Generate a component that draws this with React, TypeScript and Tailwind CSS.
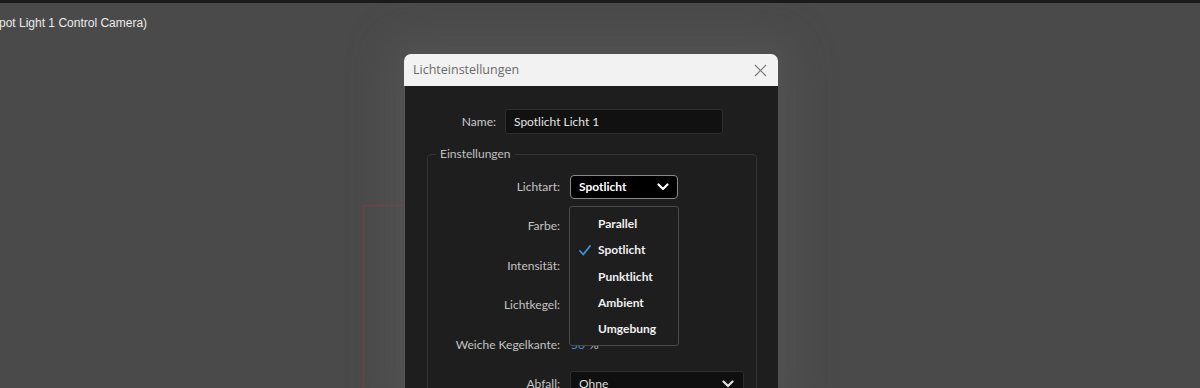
import React from "react";

const Chevron = ({ className }: { className?: string }) => (
  <svg className={className} width="12" height="8" viewBox="0 0 12 8" fill="none">
    <path d="M1.5 1.5 L6 6 L10.5 1.5" stroke="currentColor" strokeWidth="2.2" strokeLinecap="round" strokeLinejoin="round" />
  </svg>
);

const Check = () => (
  <svg width="12" height="11" viewBox="0 0 12 11" fill="none">
    <path d="M1 6 L4.3 9.5 L11 1" stroke="#3f93e2" strokeWidth="1.8" strokeLinecap="round" strokeLinejoin="round" />
  </svg>
);

const lightTypes = ["Parallel", "Spotlicht", "Punktlicht", "Ambient", "Umgebung"];

const Row = ({ label, children }: { label: string; children?: React.ReactNode }) => (
  <div className="flex items-center h-[24px]">
    <div className="w-[132px] text-right text-[#c4c4c4]">{label}</div>
    <div className="ml-[10px] flex items-center">{children}</div>
  </div>
);

export default function App() {
  return (
    <div
      className="relative w-[1200px] h-[388px] overflow-hidden bg-[#4a4a4a] flex flex-col"
      style={{ fontFamily: "Lato, 'Noto Sans', sans-serif" }}
    >
      <div className="h-[3px] bg-[#1b1b1b] shrink-0" />
      <div
        className="h-[40px] shrink-0 flex items-center text-[12px] text-[#ececec] ml-[-1px] pb-[1px]"
        style={{ fontFamily: "'Liberation Sans', Arial, sans-serif" }}
      >
        pot Light 1 Control Camera)
      </div>

      {/* composition guide on the canvas */}
      <div className="absolute left-[363px] top-[205px] w-[300px] h-[300px] border-l border-t border-[#7a3e3e]" />

      <div className="relative ml-[404px] mt-[11px] w-[374px] shrink-0 shadow-[0_0_40px_12px_rgba(95,95,95,0.45)]">
        <div className="h-[32px] bg-[#f2f2f2] rounded-t-[7px] flex items-center justify-between pl-[9px] pr-[9px]">
          <span className="text-[12.5px] text-[#6a6a6a]" style={{ fontFamily: "'Open Sans', sans-serif" }}>
            Lichteinstellungen
          </span>
          <svg width="13" height="13" viewBox="0 0 13 13" className="mr-[2px]">
            <path d="M1 1 L12 12 M12 1 L1 12" stroke="#7a7a7a" strokeWidth="1.2" />
          </svg>
        </div>

        <div className="bg-[#1e1e1e] border-l border-[#555] h-[320px] text-[12px] pt-[23px]">
          <div className="flex items-center h-[25px]">
            <div className="w-[91px] text-right text-[#cdcdcd]">Name:</div>
            <div className="ml-[9px] w-[218px] h-[25px] bg-[#111] border border-[#2f2f2f] rounded-[3px] flex items-center pl-[8px] text-[#e2e2e2]">
              Spotlicht Licht 1
            </div>
          </div>

          <fieldset className="relative mt-[12px] ml-[22px] w-[330px] border border-[#333] rounded-[4px] pt-[13px] pb-[20px]">
            <legend className="ml-[8px] px-[4px] text-[#c0c0c0] leading-[16px]">Einstellungen</legend>
            <div className="flex flex-col gap-y-[15.4px]">
              <Row label="Lichtart:">
                <div className="w-[108px] h-[24px] bg-black border border-[#8a8a8a] rounded-[4px] flex items-center justify-between pl-[8px] pr-[8px] font-bold text-white">
                  Spotlicht
                  <Chevron className="text-white" />
                </div>
              </Row>
              <Row label="Farbe:" />
              <Row label="Intensität:" />
              <Row label="Lichtkegel:" />
              <Row label="Weiche Kegelkante:">
                <span className="text-[#3f8fd8] ml-[1px]">50</span>
                <span className="text-[#bdbdbd] ml-[4px]">%</span>
              </Row>
              <Row label="Abfall:">
                <div className="w-[174px] h-[25px] bg-[#0f0f0f] border border-[#2e2e2e] rounded-[3px] flex items-center justify-between pl-[8px] pr-[9px] text-[#dedede]">
                  Ohne
                  <Chevron className="text-[#e0e0e0]" />
                </div>
              </Row>
            </div>

            <div className="absolute left-[141px] top-[44px] w-[110px] h-[140px] bg-[#1e1e1e] border border-[#4a4a4a] rounded-[3px] z-10 flex flex-col pt-[4px]">
              {lightTypes.map((t) => (
                <div key={t} className="h-[26.3px] flex items-center text-[#f0f0f0] font-bold">
                  <span className="w-[28px] flex justify-center pl-[2px]">{t === "Spotlicht" ? <Check /> : null}</span>
                  {t}
                </div>
              ))}
            </div>
          </fieldset>
        </div>
      </div>
    </div>
  );
}
